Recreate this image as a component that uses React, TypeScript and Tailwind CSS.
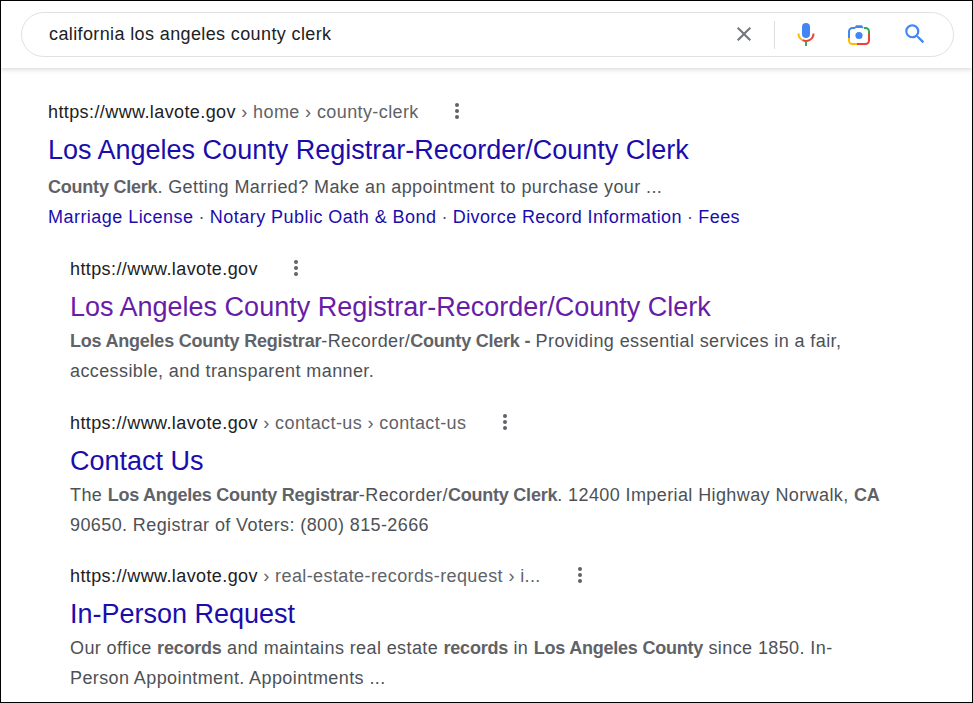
import React from "react";

function Dots() {
  return (
    <svg width="6" height="18" viewBox="0 0 6 18" className="shrink-0 -translate-y-px" fill="#5f6368">
      <circle cx="3" cy="3" r="2" />
      <circle cx="3" cy="9" r="2" />
      <circle cx="3" cy="15" r="2" />
    </svg>
  );
}

function B({ children }: { children: React.ReactNode }) {
  return <b className="tracking-[-0.22px] text-[#5f6368]">{children}</b>;
}

function Cite({ crumbs, gap }: { crumbs?: string; gap: string }) {
  return (
    <div className="flex h-[30px] items-center tracking-[0.4px]">
      <span className="text-[18px] leading-[30px] text-[#202124]">https://www.lavote.gov</span>
      {crumbs && <span className="whitespace-pre text-[18px] leading-[30px] text-[#5f6368]">{crumbs}</span>}
      <span className={gap}><Dots /></span>
    </div>
  );
}

function Sub({ crumbs, gap, title, visited, mb, children }: { crumbs?: string; gap: string; title: string; visited?: boolean; mb: string; children: React.ReactNode }) {
  return (
    <div className={mb}>
      <Cite crumbs={crumbs} gap={gap} />
      <div className={`mt-[8px] h-[30px] text-[27px] leading-[30px] ${visited ? "text-[#681da8]" : "text-[#1a0dab]"}`}>{title}</div>
      <p className="mt-[4px] w-[814px] text-[18px] leading-[30px] tracking-[0.4px] text-[#4d5156]">{children}</p>
    </div>
  );
}

export default function App() {
  return (
    <div className="h-[703px] w-[973px] overflow-hidden border border-black bg-white font-['Liberation_Sans',Arial,sans-serif]">
      <header className="h-[67px] bg-white pt-[11px] pl-[20px] pr-[18px] shadow-[0_2px_4px_rgba(60,64,67,0.18)]">
        <div className="flex h-[45px] items-center rounded-full border border-[#dfe1e5] pl-[27px]">
          <span className="flex-1 text-[18px] tracking-[0.38px] text-[#202124]">california los angeles county clerk</span>
          <svg width="24" height="24" viewBox="0 0 24 24" fill="#70757a" className="mr-[18px] -translate-y-px">
            <path d="M19 6.41 17.59 5 12 10.59 6.41 5 5 6.41 10.59 12 5 17.59 6.41 19 12 13.41 17.59 19 19 17.59 13.41 12z" />
          </svg>
          <div className="h-[28px] w-px bg-[#dadce0]" />
          <svg width="24" height="26" viewBox="0 0 24 26" className="ml-[19px]">
            <rect x="8" y="1" width="8" height="15" rx="4" fill="#4285f4" />
            <path d="M4.5 11.5a7.5 7.5 0 0 0 4 6.6" fill="none" stroke="#fbbc04" strokeWidth="2" />
            <path d="M8.5 18.1a7.6 7.6 0 0 0 7 0 7.5 7.5 0 0 0 4-6.6" fill="none" stroke="#ea4335" strokeWidth="2" />
            <rect x="11" y="19" width="2" height="5" fill="#34a853" />
          </svg>
          <svg width="24" height="24" viewBox="0 0 24 24" className="ml-[29px]">
            <circle cx="12" cy="12.5" r="3.6" fill="#4285f4" />
            <path d="M8 5 9.5 3h5L16 5" fill="#4285f4" stroke="#4285f4" strokeWidth="1.5" />
            <path d="M17 5h1.5A3.5 3.5 0 0 1 22 8.5V10" fill="none" stroke="#34a853" strokeWidth="2" />
            <path d="M22 10v7.5a3.5 3.5 0 0 1-3.5 3.5H10" fill="none" stroke="#ea4335" strokeWidth="2" />
            <path d="M10 21H5.5A3.5 3.5 0 0 1 2 17.5V15" fill="none" stroke="#fbbc04" strokeWidth="2" />
            <path d="M2 15V8.5A3.5 3.5 0 0 1 5.500 5H8" fill="none" stroke="#4285f4" strokeWidth="2" />
          </svg>
          <svg width="26" height="26" viewBox="0 0 24 24" fill="#4285f4" className="ml-[31px] mr-[25px] -translate-y-px">
            <path d="M15.5 14h-.79l-.28-.27A6.47 6.47 0 0 0 16 9.500 6.500 6.500 0 1 0 9.500 16c1.610 0 3.090-.59 4.230-1.570l.27.28v.79l5 4.990L20.490 19l-4.990-5zm-6 0C7.010 14 5 11.990 5 9.500S7.010 5 9.500 5 14 7.010 14 9.500 11.990 14 9.500 14z" />
          </svg>
        </div>
      </header>

      <main className="pt-[29px] pl-[47px]">
        <Cite crumbs=" › home › county-clerk" gap="ml-[35px]" />
        <div className="mt-[8px] h-[30px] text-[27px] leading-[30px] text-[#1a0dab]">Los Angeles County Registrar-Recorder/County Clerk</div>
        <p className="mt-[7px] text-[18px] leading-[30px] tracking-[0.4px] text-[#4d5156]"><B>County Clerk</B>. Getting Married? Make an appointment to purchase your ...</p>
        <div className="whitespace-pre text-[18px] leading-[30px] tracking-[0.46px] text-[#1a0dab]">
          Marriage License<span className="tracking-[0.13px] text-[#4d5156]"> · </span>Notary Public Oath &amp; Bond<span className="tracking-[0.13px] text-[#4d5156]"> · </span><span className="tracking-[0.38px]">Divorce Record Information</span><span className="tracking-[0.13px] text-[#4d5156]"> · </span>Fees
        </div>

        <div className="mt-[22px] pl-[22px]">
          <Sub gap="ml-[35px]" title="Los Angeles County Registrar-Recorder/County Clerk" visited mb="mb-[22px]">
            <B>Los Angeles County Registrar</B>-Recorder/<B>County Clerk -</B> Providing essential services in a fair, accessible, and transparent manner.
          </Sub>
          <Sub crumbs=" › contact-us › contact-us" gap="ml-[36px]" title="Contact Us" mb="mb-[21px]">
            The <B>Los Angeles County Registrar</B>-Recorder/<B>County Clerk</B>. 12400 Imperial Highway Norwalk, <B>CA</B> 90650. Registrar of Voters: (800) 815-2666
          </Sub>
          <Sub crumbs=" › real-estate-records-request › i..." gap="ml-[36px]" title="In-Person Request" mb="mb-[21px]">
            Our office <B>records</B> and maintains real estate <B>records</B> in <B>Los Angeles County</B> since 1850. In-Person Appointment. Appointments ...
          </Sub>
        </div>
      </main>
    </div>
  );
}
